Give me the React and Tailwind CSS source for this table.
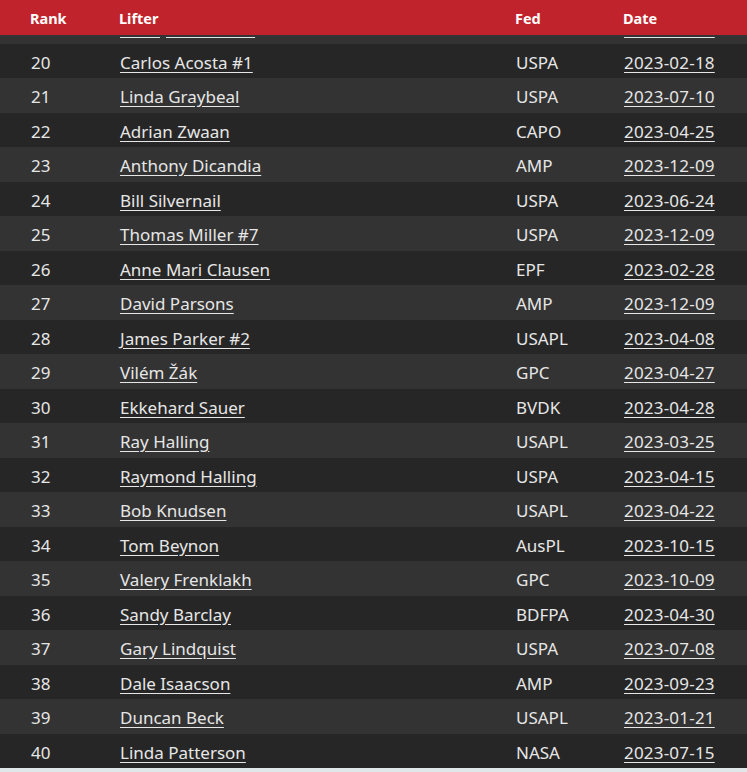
import React from "react";

const rows = [
  [19, "Kenny Hatfield Jr.", "USPA", "2023-05-20"],
  [20, "Carlos Acosta #1", "USPA", "2023-02-18"],
  [21, "Linda Graybeal", "USPA", "2023-07-10"],
  [22, "Adrian Zwaan", "CAPO", "2023-04-25"],
  [23, "Anthony Dicandia", "AMP", "2023-12-09"],
  [24, "Bill Silvernail", "USPA", "2023-06-24"],
  [25, "Thomas Miller #7", "USPA", "2023-12-09"],
  [26, "Anne Mari Clausen", "EPF", "2023-02-28"],
  [27, "David Parsons", "AMP", "2023-12-09"],
  [28, "James Parker #2", "USAPL", "2023-04-08"],
  [29, "Vilém Žák", "GPC", "2023-04-27"],
  [30, "Ekkehard Sauer", "BVDK", "2023-04-28"],
  [31, "Ray Halling", "USAPL", "2023-03-25"],
  [32, "Raymond Halling", "USPA", "2023-04-15"],
  [33, "Bob Knudsen", "USAPL", "2023-04-22"],
  [34, "Tom Beynon", "AusPL", "2023-10-15"],
  [35, "Valery Frenklakh", "GPC", "2023-10-09"],
  [36, "Sandy Barclay", "BDFPA", "2023-04-30"],
  [37, "Gary Lindquist", "USPA", "2023-07-08"],
  [38, "Dale Isaacson", "AMP", "2023-09-23"],
  [39, "Duncan Beck", "USAPL", "2023-01-21"],
  [40, "Linda Patterson", "NASA", "2023-07-15"],
];

export default function App() {
  return (
    <div
      className="relative w-[747px] h-[772px] overflow-hidden bg-[#dfe7e8]"
      style={{ fontFamily: '"Noto Sans", "Open Sans", sans-serif' }}
    >
      <div className="absolute top-0 left-0 right-0 z-10 h-[35px] pt-[3px] bg-[#c1232c] grid grid-cols-[120px_396px_108px_1fr] items-center text-[14.5px] font-bold text-white">
        <div className="pl-[30px]">Rank</div>
        <div className="-ml-px">Lifter</div>
        <div className="-ml-px">Fed</div>
        <div className="-ml-px">Date</div>
      </div>
      <div className="flex flex-col pt-[9px] text-[17px] text-[#e6e6e6]">
        {rows.map(([rank, name, fed, date]) => (
          <div
            key={rank}
            className={
              "grid grid-cols-[120px_396px_108px_1fr] items-center h-[34.5px] pt-[3px] " +
              (rank % 2 === 0 ? "bg-[#262626]" : "bg-[#333333]") +
              (rank === 19 ? " text-transparent" : "")
            }
          >
            <div className="pl-[31px]">{rank}</div>
            <div>
              <a href="#" className="underline underline-offset-[3px] decoration-[#e6e6e6]">{name}</a>
            </div>
            <div>{fed}</div>
            <div>
              <a href="#" className="underline underline-offset-[3px] decoration-[#e6e6e6] tracking-[0.2px]">{date}</a>
            </div>
          </div>
        ))}
      </div>
    </div>
  );
}
